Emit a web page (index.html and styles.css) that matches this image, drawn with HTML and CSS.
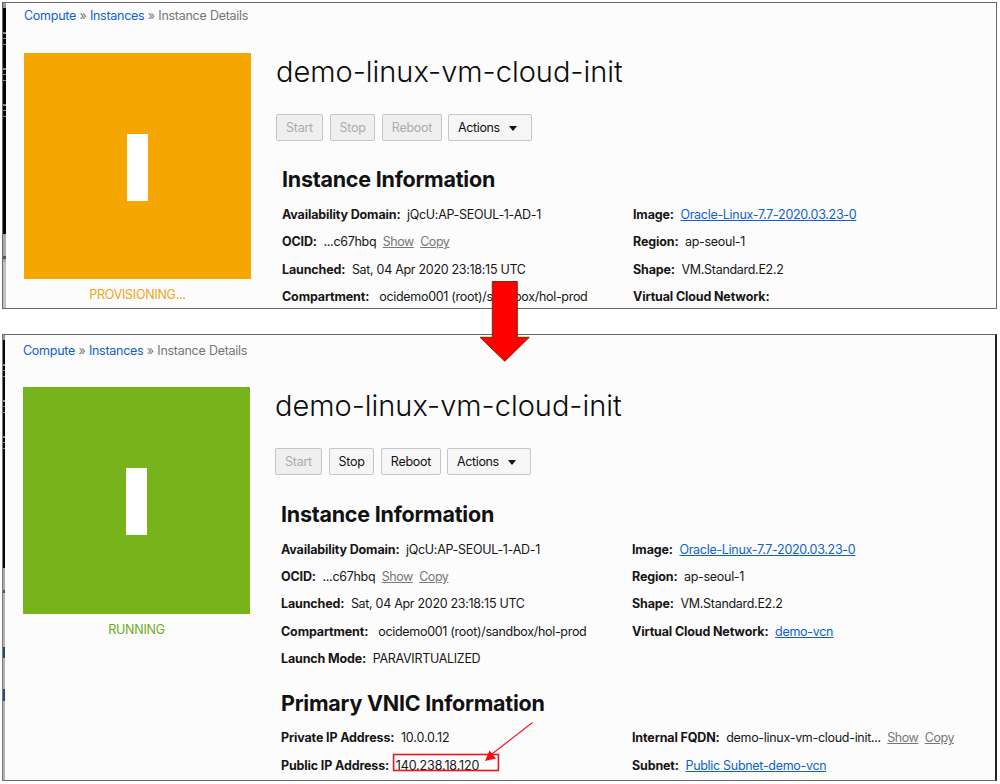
FILE: index.html
```html
<!DOCTYPE html>
<html lang="en">
<head>
<meta charset="utf-8">
<title>Instance Details</title>
<link rel="stylesheet" href="styles.css">
</head>
<body>
<main class="page">
  <section class="panel provisioning">
    <div class="edge"><i class="marks"></i><i class="rest"></i></div>
    <div class="body">
      <nav class="crumbs"><a>Compute</a> » <a>Instances</a> » <span>Instance Details</span></nav>
      <div class="columns">
        <div class="status">
          <div class="tile"><i class="bar"></i></div>
          <div class="state">PROVISIONING...</div>
        </div>
        <div class="details">
          <h1>demo-linux-vm-cloud-init</h1>
          <div class="buttons">
            <button class="start" disabled>Start</button>
            <button class="stop" disabled>Stop</button>
            <button class="reboot" disabled>Reboot</button>
            <button class="actions">Actions<i class="caret"></i></button>
          </div>
          <h2 class="h-instance">Instance Information</h2>
          <div class="info">
            <div class="col">
              <p><b>Availability Domain:</b><span>jQcU:AP-SEOUL-1-AD-1</span></p>
              <p><b>OCID:</b><span>...c67hbq</span><a class="minor">Show</a><a class="minor">Copy</a></p>
              <p><b>Launched:</b><span>Sat, 04 Apr 2020 23:18:15 UTC</span></p>
              <p><b class="wide">Compartment:</b><span>ocidemo001 (root)/sandbox/hol-prod</span></p>
            </div>
            <div class="col">
              <p><b>Image:</b><a class="link">Oracle-Linux-7.7-2020.03.23-0</a></p>
              <p><b>Region:</b><span>ap-seoul-1</span></p>
              <p><b>Shape:</b><span>VM.Standard.E2.2</span></p>
              <p><b>Virtual Cloud Network:</b></p>
            </div>
          </div>
        </div>
      </div>
    </div>
  </section>
  <section class="panel running">
    <div class="edge"><i class="marks"></i><i class="rest"></i></div>
    <div class="body">
      <nav class="crumbs"><a>Compute</a> » <a>Instances</a> » <span>Instance Details</span></nav>
      <div class="columns">
        <div class="status">
          <div class="tile"><i class="bar"></i></div>
          <div class="state">RUNNING</div>
        </div>
        <div class="details">
          <h1>demo-linux-vm-cloud-init</h1>
          <div class="buttons">
            <button class="start" disabled>Start</button>
            <button class="stop">Stop</button>
            <button class="reboot">Reboot</button>
            <button class="actions">Actions<i class="caret"></i></button>
          </div>
          <h2 class="h-instance">Instance Information</h2>
          <div class="info">
            <div class="col">
              <p><b>Availability Domain:</b><span>jQcU:AP-SEOUL-1-AD-1</span></p>
              <p><b>OCID:</b><span>...c67hbq</span><a class="minor">Show</a><a class="minor">Copy</a></p>
              <p><b>Launched:</b><span>Sat, 04 Apr 2020 23:18:15 UTC</span></p>
              <p><b class="wide">Compartment:</b><span>ocidemo001 (root)/sandbox/hol-prod</span></p>
              <p><b>Launch Mode:</b><span>PARAVIRTUALIZED</span></p>
            </div>
            <div class="col">
              <p><b>Image:</b><a class="link">Oracle-Linux-7.7-2020.03.23-0</a></p>
              <p><b>Region:</b><span>ap-seoul-1</span></p>
              <p><b>Shape:</b><span>VM.Standard.E2.2</span></p>
              <p><b>Virtual Cloud Network:</b><a class="link">demo-vcn</a></p>
            </div>
          </div>
          <h2 class="h-vnic">Primary VNIC Information</h2>
          <div class="info">
            <div class="col">
              <p><b>Private IP Address:</b><span class="ip">10.0.0.12</span></p>
              <p><b>Public IP Address:</b><span class="ip">140.238.18.120</span></p>
            </div>
            <div class="col">
              <p><b>Internal FQDN:</b><span>demo-linux-vm-cloud-init...</span><a class="minor">Show</a><a class="minor">Copy</a></p>
              <p><b>Subnet:</b><a class="link">Public Subnet-demo-vcn</a></p>
            </div>
          </div>
        </div>
      </div>
    </div>
  </section>
  <svg class="annotations" width="1000" height="784" viewBox="0 0 1000 784">
    <path d="M492.3 281.5H517.3V337.3H529.3L504.8 361.3L480 337.3H492.3Z" fill="#fe0000" stroke="#7d2a0c" stroke-width="1"/>
    <rect x="393.6" y="754.5" width="104.8" height="16" fill="none" stroke="#f0141e" stroke-width="1.6"/>
    <path d="M532.5 722.5L492 754" stroke="#f5141c" stroke-width="1.1" fill="none"/>
    <path d="M485 761L489.5 750.5L496 758.5Z" fill="#fa0a10"/>
  </svg>
</main>
</body>
</html>
```
FILE: styles.css
```css
* { box-sizing: border-box; }
body { margin: 0; background: #fff; font-family: Inter, "Liberation Sans", sans-serif; font-size: 13px; color: #161616; }
.page { position: relative; width: 1000px; height: 784px; padding: 2px 3px 0 2px; overflow: hidden; }
.panel { display: flex; width: 995px; background: #fcfcfc; border: 1px solid #686868; overflow: hidden; }
.provisioning { height: 307px; margin-bottom: 25px; }
.running { height: 447px; border-right: 2px solid #222; border-left-color: #777; }
.edge { display: flex; flex-direction: column; flex: 0 0 3px; }
.running .edge { flex-basis: 2px; }
.marks { height: 231px; background: linear-gradient(#999 0 5px, transparent 5px 29px, #888 29px 31px, transparent 31px 35px, #888 35px 36px, transparent 36px 41px, #888 41px 42px, transparent 42px 65px, #888 65px 67px, transparent 67px 71px, #888 71px 72px, transparent 72px 77px, #888 77px 78px, transparent 78px 101px, #888 101px 103px, transparent 103px 107px, #888 107px 108px, transparent 108px 113px, #888 113px 114px, transparent 114px) #050505; }
.running .marks { height: 233px; }
.rest { flex: 1; background: linear-gradient(#aaa 0 22px, #555 22px 25px, #aaa 25px 28px, #c0c0c0 28px); }
.running .rest { background: linear-gradient(#aaa 0 22px, #555 22px 25px, #b4b4b4 25px 79px, #244a84 79px 90px, #b4b4b4 90px 121px, #244a84 121px 133px, #b4b4b4 133px); }
.body { flex: 1; padding: 4px 0 0 18px; }
.running .body { padding-top: 7px; }
.crumbs { height: 18px; line-height: 18px; font-size: 12.5px; letter-spacing: -.27px; word-spacing: .2px; color: #757575; white-space: nowrap; }
.running .crumbs { height: 17px; }
.crumbs a { color: #0f60cc; }
.columns { display: flex; gap: 25px; padding-top: 28px; }
.status { width: 227px; text-align: center; }
.tile { height: 226px; background: #f6a600; padding: 81px 0 0 103px; }
.running .tile { height: 227px; background: #77b41b; }
.bar { display: block; width: 21px; height: 67px; background: #fff; }
.state { margin-top: 6.5px; line-height: 18px; color: #f0a312; font-size: 12.5px; letter-spacing: -.27px; }
.running .state { color: #6dab18; }
h1 { margin: 0; height: 38px; line-height: 38px; font-size: 29px; font-weight: 350; letter-spacing: -.02px; color: #0c0c0c; white-space: nowrap; }
.buttons { display: flex; margin-top: 23px; }
button { height: 27px; padding: 0; border: 1px solid #c4c6ca; border-radius: 2px; background: #f6f6f7; font: 12.5px Inter, "Liberation Sans", sans-serif; letter-spacing: -.25px; color: #111; display: flex; align-items: center; justify-content: center; }
button:disabled { background: #efeff0; color: #ababab; }
.start { width: 47px; margin-right: 7px; }
.stop { width: 45px; margin-right: 7px; }
.reboot { width: 60px; margin-right: 6px; }
.actions { width: 84px; justify-content: flex-start; padding-left: 9px; letter-spacing: -.36px; }
.caret { margin: 2px 0 0 9.5px; border: 4.5px solid transparent; border-top: 5px solid #111; border-bottom: 0; }
h2 { margin: 0 0 0 6px; height: 28px; line-height: 28px; font-size: 21.5px; font-weight: 700; letter-spacing: -.24px; color: #111; white-space: nowrap; }
.h-instance { margin-top: 24px; }
.running .h-instance { margin-top: 25px; }
.h-vnic { margin-top: 16px; }
.info { display: flex; padding: 8px 0 0 6px; }
.running .info { padding-top: 7.6px; }
.col { width: 351px; }
.col p { display: flex; margin: 0; height: 27.4px; line-height: 27.4px; white-space: nowrap; font-size: 12.5px; letter-spacing: -.3px; }
.col b { margin-right: 6.6px; font-weight: 700; letter-spacing: -.14px; }
.col .wide { margin-right: 10px; }
.col .ip { letter-spacing: -.12px; }
.link { color: #0f60cc; text-decoration: underline; }
.minor { margin-left: 6.4px; color: #777; text-decoration: underline; letter-spacing: -.45px; }
.annotations { position: absolute; left: 0; top: 0; }
```
